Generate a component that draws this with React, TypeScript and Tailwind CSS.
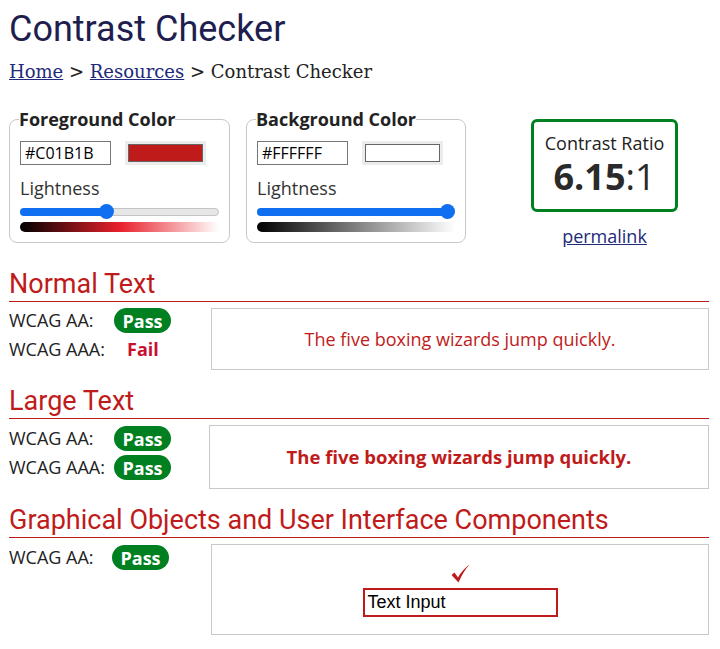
import React from "react";

const red = "#c01b1b";

function Slider({ pct }: { pct: number }) {
  return (
    <div className="relative h-[15px] mt-[5px]">
      <div className="absolute left-0 right-0 top-[4px] h-[8px] rounded-full border border-[#c4c4c4] bg-[#e6e6e6]" />
      <div
        className="absolute left-0 top-[4px] h-[8px] rounded-full bg-[#0f6ff0]"
        style={{ width: `calc(${pct}% - ${(pct * 0.15).toFixed(2)}px + 7px)` }}
      />
      <div
        className="absolute top-0 w-[15px] h-[15px] rounded-full bg-[#0f6ff0]"
        style={{ left: `calc(${pct}% - ${(pct * 0.15).toFixed(2)}px)` }}
      />
    </div>
  );
}

function ColorBox({
  title,
  hex,
  swatch,
  pct,
  gradient,
  width,
}: {
  title: string;
  hex: string;
  swatch: string;
  pct: number;
  gradient: string;
  width: string;
}) {
  return (
    <fieldset className={`border border-[#c8c8c8] rounded-[8px] px-[10px] pb-[10px] pt-0 ${width}`}>
      <legend className="text-[18px] font-bold text-[#222] leading-[20px] -ml-[1px]">{title}</legend>
      <div className="flex items-center gap-[14px] mt-[12px]">
        <div className="w-[91px] h-[24px] border border-[#767676] px-[4px] text-[16px] leading-[22px] text-black">
          {hex}
        </div>
        <div className="w-[81px] h-[24px] bg-[#ececec] p-[3px]">
          <div className="w-full h-full border border-[#666]" style={{ background: swatch }} />
        </div>
      </div>
      <div className="text-[18px] text-[#333] mt-[12px] leading-[22px]">Lightness</div>
      <Slider pct={pct} />
      <div className="h-[10px] mt-[3px] rounded-l-[5px]" style={{ background: gradient }} />
    </fieldset>
  );
}

function Pass() {
  return (
    <span className="inline-flex items-center justify-center w-[57px] h-[25px] rounded-full bg-[#008020] text-white font-bold text-[18px] leading-none">
      Pass
    </span>
  );
}

function Heading({ children }: { children: React.ReactNode }) {
  return (
    <div
      className="text-[27px] leading-[32px] text-[#c01b1b] border-b border-[#c01b1b] pb-[1px] mr-[11px]"
      style={{ fontFamily: "Roboto, sans-serif" }}
    >
      {children}
    </div>
  );
}

function Row({ label, children }: { label: string; children: React.ReactNode }) {
  return (
    <div className="flex items-center h-[29px] text-[18px] text-[#222]">
      <span className="w-[105px]">{label}</span>
      {children}
    </div>
  );
}

export default function App() {
  return (
    <div
      className="w-[720px] h-[649px] bg-white pl-[9px] overflow-hidden"
      style={{ fontFamily: "'Open Sans', sans-serif" }}
    >
      <h1
        className="text-[36px] leading-[42px] text-[#1e1e4f] pt-[8px]"
        style={{ fontFamily: "Roboto, sans-serif" }}
      >
        Contrast Checker
      </h1>
      <div
        className="text-[18px] text-[#222] mt-[11px] leading-[22px]"
        style={{ fontFamily: "'DejaVu Serif', serif" }}
      >
        <span className="underline text-[#1e2a7a]">Home</span> &gt;{" "}
        <span className="underline text-[#1e2a7a]">Resources</span> &gt; Contrast Checker
      </div>

      <div className="flex items-start mt-[26px]">
        <ColorBox
          title="Foreground Color"
          hex="#C01B1B"
          swatch={red}
          pct={43}
          gradient="linear-gradient(to right, #000, #e8202a 50%, #fff)"
          width="w-[221px]"
        />
        <div className="w-[16px]" />
        <ColorBox
          title="Background Color"
          hex="#FFFFFF"
          swatch="#fff"
          pct={100}
          gradient="linear-gradient(to right, #000, #fff)"
          width="w-[220px]"
        />
        <div className="ml-[65px] mt-[10px] flex flex-col items-center">
          <div className="w-[147px] h-[93px] border-[3px] border-[#008020] rounded-[6px] flex flex-col items-center justify-center pt-[1px]">
            <div className="text-[18px] text-[#222] leading-[22px]">Contrast Ratio</div>
            <div className="text-[36px] leading-[46px] text-[#2a2a2a]">
              <span className="font-bold">6.15</span>:1
            </div>
          </div>
          <div className="mt-[13px] text-[18px] underline text-[#1e2a7a] leading-[22px]">permalink</div>
        </div>
      </div>

      <div className="mt-[21px]">
        <Heading>Normal Text</Heading>
        <div className="flex mt-[6px] mr-[11px]">
          <div className="w-[202px] -mt-[2px]">
            <Row label="WCAG AA:">
              <Pass />
            </Row>
            <Row label="WCAG AAA:">
              <span className="ml-[13px] font-bold text-[#c8102e]">Fail</span>
            </Row>
          </div>
          <div className="flex-1 h-[62px] border border-[#c8c8c8] flex items-center justify-center text-[18px] text-[#c01b1b]">
            The five boxing wizards jump quickly.
          </div>
        </div>
      </div>

      <div className="mt-[15px]">
        <Heading>Large Text</Heading>
        <div className="flex mt-[6px] mr-[11px]">
          <div className="w-[200px] -mt-[1px]">
            <Row label="WCAG AA:">
              <Pass />
            </Row>
            <Row label="WCAG AAA:">
              <Pass />
            </Row>
          </div>
          <div className="flex-1 h-[64px] border border-[#c8c8c8] flex items-center justify-center text-[18.5px] font-bold text-[#c01b1b]">
            The five boxing wizards jump quickly.
          </div>
        </div>
      </div>

      <div className="mt-[15px]">
        <Heading>Graphical Objects and User Interface Components</Heading>
        <div className="flex mt-[6px] mr-[11px]">
          <div className="w-[202px]">
            <div className="flex items-center h-[27px] text-[18px] text-[#222]">
              <span className="w-[103px]">WCAG AA:</span>
              <Pass />
            </div>
          </div>
          <div className="flex-1 h-[91px] border border-[#c8c8c8] flex flex-col items-center justify-center pt-[1px]">
            <svg width="19" height="19" viewBox="0 0 19 19" className="mb-[5px]">
              <path d="M0.5 11 L3.5 8.5 L7 13.5 Q11.5 5.5 18.5 0.5 Q12.5 7 7.5 18.5 Z" fill="#c01b1b" />
            </svg>
            <div
              className="w-[195px] h-[29px] border-2 border-[#c01b1b] text-[18px] text-black leading-[25px] px-[3px]"
              style={{ fontFamily: "'Liberation Sans', Arial, sans-serif" }}
            >
              Text Input
            </div>
          </div>
        </div>
      </div>
    </div>
  );
}
